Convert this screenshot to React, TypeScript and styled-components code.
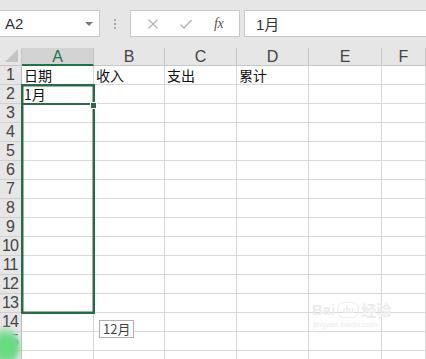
import React from "react";
import styled, { createGlobalStyle } from "styled-components";

const Global = createGlobalStyle`
  html, body { margin: 0; padding: 0; background: #ffffff; }
  body { width: 426px; height: 359px; overflow: hidden; font-family: "Liberation Sans", "Noto Sans CJK SC", sans-serif; }
  #root { width: 426px; height: 359px; }
`;

const Page = styled.div`
  position: relative;
  width: 426px;
  height: 359px;
  overflow: hidden;
  background: #ffffff;
`;

const Toolbar = styled.div`
  height: 48px;
  background: #e6e6e6;
  display: flex;
  align-items: flex-start;
  padding-top: 10px;
  box-sizing: border-box;
`;

const NameBox = styled.div`
  width: 100px;
  height: 27px;
  box-sizing: border-box;
  background: #ffffff;
  border: 1px solid #c8c8c8;
  border-left: none;
  display: flex;
  align-items: center;
  justify-content: space-between;
  padding: 0 6px 0 5px;
  font-size: 15px;
  color: #333333;
`;

const DropArrow = styled.span`
  width: 0;
  height: 0;
  border-left: 4px solid transparent;
  border-right: 4px solid transparent;
  border-top: 4px solid #7a7a7a;
  margin-top: 1px;
`;

const Dots = styled.div`
  width: 30px;
  height: 27px;
  display: flex;
  flex-direction: column;
  align-items: center;
  justify-content: center;
  gap: 2px;
`;

const Dot = styled.span`
  width: 2px;
  height: 2px;
  background: #a8a8a8;
`;

const FormulaButtons = styled.div`
  width: 110px;
  height: 27px;
  box-sizing: border-box;
  background: #ffffff;
  border: 1px solid #c8c8c8;
  display: flex;
  align-items: center;
  justify-content: space-around;
  padding: 0 4px 0 6px;
`;

const IconSlot = styled.span`
  width: 24px;
  display: flex;
  align-items: center;
  justify-content: center;
`;

const Fx = styled.span`
  font-family: "Liberation Serif", "DejaVu Serif", serif;
  font-style: italic;
  font-size: 14px;
  color: #555555;
  letter-spacing: -0.5px;
`;

const FormulaInput = styled.div`
  flex: 1;
  height: 27px;
  margin-left: 4px;
  box-sizing: border-box;
  background: #ffffff;
  border: 1px solid #c8c8c8;
  border-right: none;
  display: flex;
  align-items: center;
  padding-left: 11px;
  font-family: "Liberation Sans", "Noto Sans CJK SC", sans-serif;
  font-size: 15px;
  color: #333333;
`;

const Sheet = styled.div`
  position: relative;
  display: grid;
  grid-template-columns: 22px 72px 71px 72px 72px 73px 1fr;
  grid-template-rows: 18px;
  grid-auto-rows: 19px;
`;

const Corner = styled.div`
  background: #e6e6e6;
  border-right: 1px solid #c6c6c6;
  border-bottom: 1px solid #c6c6c6;
  box-sizing: border-box;
  position: relative;
  &::after {
    content: "";
    position: absolute;
    right: 3px;
    bottom: 3px;
    width: 0;
    height: 0;
    border-left: 13px solid transparent;
    border-bottom: 13px solid #c4c4c4;
  }
`;

const ColHeader = styled.div<{ $active?: boolean }>`
  box-sizing: border-box;
  background: ${(p) => (p.$active ? "#d3d3d3" : "#e6e6e6")};
  color: ${(p) => (p.$active ? "#217346" : "#444444")};
  border-right: 1px solid #c6c6c6;
  border-bottom: ${(p) => (p.$active ? "2px solid #217346" : "1px solid #c6c6c6")};
  display: flex;
  align-items: center;
  justify-content: center;
  font-size: 16px;
  line-height: 1;
  padding-top: 1px;
`;

const RowHeader = styled.div`
  box-sizing: border-box;
  background: #e6e6e6;
  color: #444444;
  border-right: 1px solid #bcbcbc;
  border-bottom: 1px solid #d0d0d0;
  display: flex;
  align-items: center;
  justify-content: center;
  font-size: 16px;
  letter-spacing: -1px;
  padding-right: 1px;
  overflow: hidden;
`;

const Cell = styled.div`
  box-sizing: border-box;
  border-right: 1px solid #d9d9d9;
  border-bottom: 1px solid #d9d9d9;
  font-family: "Noto Sans CJK SC", "Liberation Sans", sans-serif;
  font-size: 14px;
  color: #111111;
  display: flex;
  align-items: center;
  padding-left: 2px;
  white-space: nowrap;
`;

const Selection = styled.div`
  position: absolute;
  left: 21px;
  top: 36px;
  width: 74px;
  height: 230px;
  box-sizing: border-box;
  border: 2px solid #2a6a4a;
  box-shadow: inset 0 0 0 0.5px #2a6a4a;
  pointer-events: none;
`;

const ActiveLine = styled.div`
  position: absolute;
  left: -2px;
  right: -2px;
  top: 17px;
  height: 2px;
  background: #2a6a4a;
`;

const FillHandle = styled.div`
  position: absolute;
  right: -4px;
  top: 16px;
  width: 5px;
  height: 5px;
  background: #2a6a4a;
  border: 1px solid #ffffff;
`;

const Tip = styled.div`
  position: absolute;
  left: 99px;
  top: 320px;
  height: 18px;
  padding: 0 3px;
  box-sizing: border-box;
  background: #ffffff;
  border: 1px solid #b0b0b0;
  font-family: "Noto Sans CJK SC", "Liberation Sans", sans-serif;
  font-size: 13px;
  line-height: 16px;
  color: #444444;
`;

const Blob = styled.div`
  position: absolute;
  left: -10px;
  top: 328px;
  width: 30px;
  height: 38px;
  border-radius: 50%;
  background: radial-gradient(circle at 55% 50%, #5fe07a 0%, #6fd888 40%, #b7e8c2 75%, rgba(220, 240, 225, 0) 100%);
  filter: blur(2px);
`;

const Watermark = styled.div`
  position: absolute;
  left: 312px;
  top: 302px;
  width: 90px;
  display: flex;
  flex-direction: column;
  align-items: flex-start;
  color: #ececec;
  pointer-events: none;
`;

const WmTop = styled.div`
  display: flex;
  align-items: center;
  gap: 2px;
  font-family: "Liberation Sans", "Noto Sans CJK SC", sans-serif;
  font-weight: bold;
  font-size: 15px;
  line-height: 16px;
`;

const WmPaw = styled.span`
  display: inline-flex;
  align-items: center;
  justify-content: center;
  width: 20px;
  height: 14px;
  border: 1.5px solid #ececec;
  border-radius: 7px;
  font-size: 9px;
`;

const WmCn = styled.span`
  font-family: "Noto Sans CJK SC", sans-serif;
`;

const WmSub = styled.div`
  font-family: "Liberation Sans", sans-serif;
  font-size: 8px;
  margin-top: 2px;
  margin-left: 1px;
`;

const cols = ["A", "B", "C", "D", "E", "F"];
const data: Record<number, string[]> = {
  1: ["日期", "收入", "支出", "累计", "", ""],
  2: ["1月", "", "", "", "", ""],
};

export default function App() {
  const rows = Array.from({ length: 16 }, (_, i) => i + 1);
  return (
    <Page>
      <Global />
      <Toolbar>
        <NameBox>
          A2
          <DropArrow />
        </NameBox>
        <Dots>
          <Dot />
          <Dot />
          <Dot />
        </Dots>
        <FormulaButtons>
          <IconSlot>
            <svg width="12" height="12" viewBox="0 0 12 12">
              <path d="M1.5 1.5 L10.5 10.5 M10.5 1.5 L1.5 10.5" stroke="#b4b4b4" strokeWidth="1.3" fill="none" />
            </svg>
          </IconSlot>
          <IconSlot>
            <svg width="14" height="12" viewBox="0 0 14 12">
              <path d="M1.5 6.5 L5 10 L12.5 2" stroke="#b4b4b4" strokeWidth="1.4" fill="none" />
            </svg>
          </IconSlot>
          <IconSlot>
            <Fx>fx</Fx>
          </IconSlot>
        </FormulaButtons>
        <FormulaInput>1月</FormulaInput>
      </Toolbar>
      <Sheet>
        <Corner />
        {cols.map((c) => (
          <ColHeader key={c} $active={c === "A"}>
            {c}
          </ColHeader>
        ))}
        {rows.map((r) => (
          <React.Fragment key={r}>
            <RowHeader>{r < 16 ? r : ""}</RowHeader>
            {cols.map((c, ci) => (
              <Cell key={c}>{data[r]?.[ci] ?? ""}</Cell>
            ))}
          </React.Fragment>
        ))}
        <Selection>
          <ActiveLine />
          <FillHandle />
        </Selection>
      </Sheet>
      <Tip>12月</Tip>
      <Watermark>
        <WmTop>
          Bai<WmPaw>du</WmPaw>
          <WmCn>经验</WmCn>
        </WmTop>
        <WmSub>jingyan.baidu.com</WmSub>
      </Watermark>
      <Blob />
    </Page>
  );
}
